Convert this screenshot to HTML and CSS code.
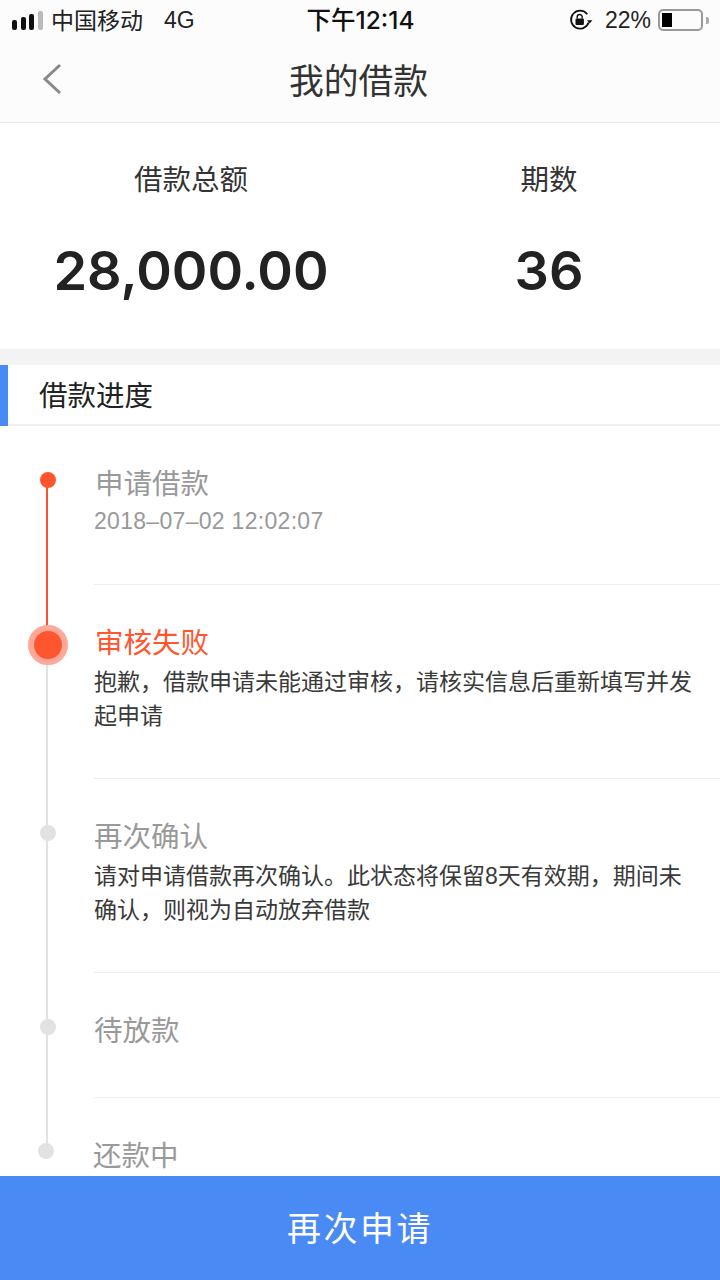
FILE: index.html
```html
<!DOCTYPE html>
<html lang="zh-CN">
<head>
    <meta charset="UTF-8">
    <meta name="viewport" content="width=device-width, initial-scale=1.0">
    <title>我的借款</title>
    <link rel="stylesheet" href="styles.css">
</head>
<body>
    <div class="page">
        <!-- Status bar -->
        <div class="status-bar">
            <div class="status-left">
                <div class="signal">
                    <span class="signal-bar bar-1"></span>
                    <span class="signal-bar bar-2"></span>
                    <span class="signal-bar bar-3"></span>
                    <span class="signal-bar bar-4"></span>
                </div>
                <span class="carrier">中国移动</span>
                <span class="network">4G</span>
            </div>
            <div class="status-time">下午12:14</div>
            <div class="status-right">
                <svg class="lock-icon" width="24" height="22" viewBox="0 0 24 22">
                    <path d="M19.6 13.5A9 9 0 1 1 18.2 5.2" fill="none" stroke="#111" stroke-width="1.8"/>
                    <path d="M18 11.2h5.4l-2.7 3.2z" fill="#111"/>
                    <rect x="6.5" y="9.5" width="8.4" height="6.5" rx="1" fill="#111"/>
                    <path d="M8.2 9.5V8a2.5 2.5 0 0 1 5 0v1.5" fill="none" stroke="#111" stroke-width="1.4"/>
                </svg>
                <span class="battery-text">22%</span>
                <div class="battery"><span class="battery-level"></span></div>
                <span class="battery-tip"></span>
            </div>
        </div>

        <!-- Nav -->
        <header class="nav">
            <svg class="back-icon" width="22" height="32" viewBox="0 0 22 32">
                <path d="M19 2L4 16l15 14" fill="none" stroke="#888" stroke-width="3"/>
            </svg>
            <h1>我的借款</h1>
        </header>

        <!-- Loan summary -->
        <section class="summary">
            <div class="summary-col">
                <div class="summary-label">借款总额</div>
                <div class="summary-value">28,000.00</div>
            </div>
            <div class="summary-col">
                <div class="summary-label">期数</div>
                <div class="summary-value">36</div>
            </div>
        </section>

        <div class="section-head"><span class="section-title">借款进度</span></div>

        <!-- Progress -->
        <div class="timeline">
            <div class="step step-done">
                <span class="dot"></span>
                <div class="step-body">
                    <div class="step-title">申请借款</div>
                    <div class="step-time">2018–07–02 12:02:07</div>
                </div>
            </div>
            <div class="step step-current">
                <span class="dot"></span>
                <div class="step-body">
                    <div class="step-title">审核失败</div>
                    <div class="step-desc">抱歉，借款申请未能通过审核，请核实信息后重新填写并发起申请</div>
                </div>
            </div>
            <div class="step">
                <span class="dot"></span>
                <div class="step-body">
                    <div class="step-title">再次确认</div>
                    <div class="step-desc">请对申请借款再次确认。此状态将保留8天有效期，期间未确认，则视为自动放弃借款</div>
                </div>
            </div>
            <div class="step">
                <span class="dot"></span>
                <div class="step-body">
                    <div class="step-title">待放款</div>
                </div>
            </div>
            <div class="step step-last">
                <span class="dot"></span>
                <div class="step-body">
                    <div class="step-title">还款中</div>
                </div>
            </div>
        </div>

        <button class="btn-apply">再次申请</button>
    </div>
</body>
</html>
```

FILE: styles.css
```css
* {
    box-sizing: border-box;
}
body {
    margin: 0;
    background: #fff;
    font-family: "Liberation Sans", "Noto Sans CJK SC", sans-serif;
    color: #222;
}
.page {
    width: 720px;
    height: 1280px;
    display: flex;
    flex-direction: column;
    overflow: hidden;
}

/* status bar */
.status-bar {
    height: 40px;
    flex: none;
    background: #fcfcfc;
    display: grid;
    grid-template-columns: 1fr auto 1fr;
    align-items: center;
    padding: 0 11px 0 12px;
    font-size: 23px;
    color: #222;
}
.status-left {
    display: flex;
    align-items: center;
}
.signal {
    display: flex;
    align-items: flex-end;
    gap: 3.3px;
    width: 31px;
    height: 19px;
    margin-right: 8px;
}
.signal-bar {
    width: 5.5px;
    background: #111;
    border-radius: 2px;
}
.bar-1 { height: 10px; }
.bar-2 { height: 13px; }
.bar-3 { height: 16px; }
.bar-4 { height: 19px; background: #bbb; }
.carrier {
    margin-top: -3px;
}
.network {
    margin-left: 21px;
}
.status-time {
    margin-top: -3px;
    font-family: "Inter", "Noto Sans CJK SC", sans-serif;
    font-size: 24.5px;
    font-weight: 500;
    color: #111;
}
.status-right {
    display: flex;
    align-items: center;
    justify-content: flex-end;
}
.lock-icon {
    margin-right: 12px;
}
.battery-text {
    margin-right: 7px;
}
.battery {
    width: 45px;
    height: 22px;
    border: 2px solid #999;
    border-radius: 5px;
    padding: 2px;
}
.battery-level {
    display: block;
    width: 10px;
    height: 100%;
    background: #000;
}
.battery-tip {
    width: 3px;
    height: 7px;
    margin-left: 3px;
    background: #aaa;
    border-radius: 0 2px 2px 0;
}

/* nav */
.nav {
    height: 83px;
    flex: none;
    background: #fcfcfc;
    border-bottom: 1px solid #e8e8e8;
    display: flex;
    align-items: center;
    justify-content: center;
    padding: 0 3px 4px 0;
    position: relative;
}
.nav h1 {
    margin: 0;
    font-size: 34.8px;
    font-weight: 400;
    color: #333;
}
.back-icon {
    position: absolute;
    left: 41px;
    top: 23px;
}

/* summary */
.summary {
    height: 226px;
    flex: none;
    display: grid;
    grid-template-columns: 382px 334px;
    padding-top: 34px;
    text-align: center;
}
.summary-label {
    font-size: 28.5px;
    line-height: 46px;
    color: #333;
}
.summary-value {
    margin-top: 30px;
    font-family: "Inter", "Liberation Sans", sans-serif;
    font-size: 54px;
    line-height: 76px;
    font-weight: 600;
    color: #222;
}

.section-head {
    height: 77px;
    flex: none;
    border-top: 16px solid #f3f3f3;
    border-bottom: 2px solid #f0f0f0;
    display: flex;
    align-items: center;
    padding: 0 0 3px 39px;
    font-size: 28.5px;
    color: #222;
    position: relative;
}
.section-head::before {
    content: "";
    position: absolute;
    left: 0;
    top: 0;
    bottom: -2px;
    width: 8px;
    background: #4a8af4;
}

/* timeline */
.timeline {
    flex: 1;
    min-height: 0;
    margin-top: -1px;
    overflow: hidden;
}
.step {
    position: relative;
    padding-left: 94px;
}
.step::before {
    content: "";
    position: absolute;
    left: 46px;
    top: 0;
    bottom: 0;
    width: 2px;
    background: #e2e2e2;
}
.step-body {
    padding: 38px 0 46px;
    border-bottom: 1px solid #eee;
}
.step-title {
    font-size: 28.5px;
    line-height: 40px;
    color: #999;
}
.step-time {
    font-size: 23px;
    line-height: 35px;
    letter-spacing: 0.3px;
    color: #999;
}
.step-desc {
    margin: 2px 0 -1px;
    padding-right: 24px;
    font-size: 23px;
    line-height: 34px;
    color: #3a3a3a;
}
.dot {
    position: absolute;
    left: 40px;
    top: 46px;
    width: 16px;
    height: 16px;
    border-radius: 50%;
    background: #e2e2e2;
    z-index: 1;
}
.step-done::before {
    top: 54px;
    background: #f9522e;
}
.step-done .dot {
    top: 47px;
    background: #ff5630;
}
.step-done .step-body {
    padding: 39px 0 45px;
}
.step-done .step-title {
    padding-left: 1px;
}
.step-current::after {
    content: "";
    position: absolute;
    left: 46px;
    top: 0;
    width: 2px;
    height: 60px;
    background: #f9522e;
}
.step-current .dot {
    left: 28px;
    top: 40px;
    width: 40px;
    height: 40px;
    background: #ff5630;
    border: 6px solid #ffa898;
    background-clip: border-box;
    z-index: 2;
}
.step-current .step-title {
    color: #ff5630;
    padding-left: 1px;
}
.step-last::before {
    bottom: auto;
    height: 53px;
}
.step-last {
    padding-left: 93px;
}
.step-last .dot {
    left: 38px;
    top: 45px;
}

.btn-apply {
    height: 104px;
    flex: none;
    width: 100%;
    border: none;
    padding: 0 0 4px;
    background: #4a8af4;
    color: #fff;
    font-family: inherit;
    font-size: 34px;
    letter-spacing: 2.5px;
    cursor: pointer;
}
```
